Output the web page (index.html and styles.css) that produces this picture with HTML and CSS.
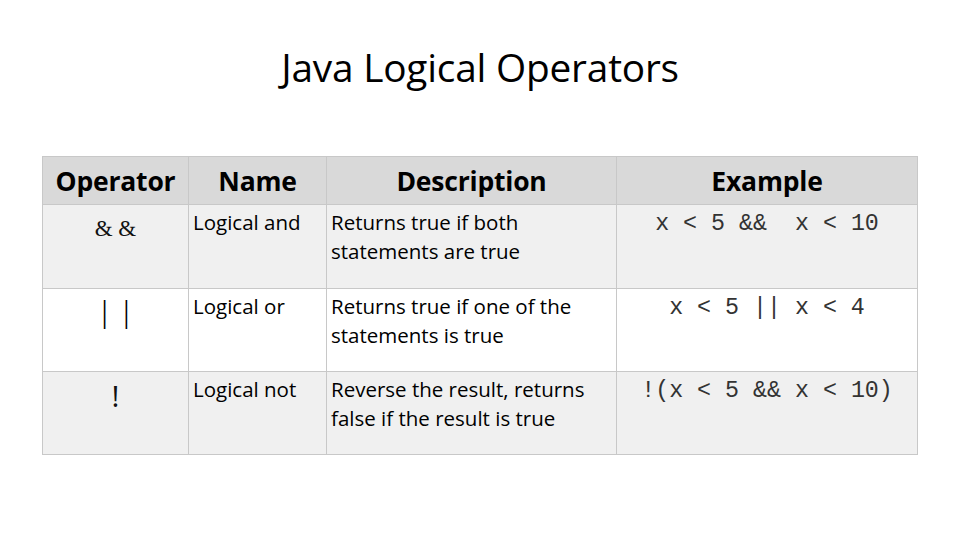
FILE: index.html
```html
<!DOCTYPE html>
<html lang="en">
<head>
<meta charset="utf-8">
<title>Java Logical Operators</title>
<link rel="stylesheet" href="styles.css">
</head>
<body>
<div class="slide">
  <h1 class="title">Java Logical Operators</h1>
  <table class="ops">
    <colgroup>
      <col class="c-op"><col class="c-name"><col class="c-desc"><col class="c-ex">
    </colgroup>
    <thead>
      <tr class="head">
        <th>Operator</th>
        <th>Name</th>
        <th>Description</th>
        <th>Example</th>
      </tr>
    </thead>
    <tbody>
      <tr class="shade">
        <td class="op op-amp">&amp; &amp;</td>
        <td class="txt">Logical and</td>
        <td class="txt">Returns true if both statements are true</td>
        <td class="ex">x &lt; 5 &amp;&amp;&nbsp; x &lt; 10</td>
      </tr>
      <tr class="plain">
        <td class="op op-bar">| |</td>
        <td class="txt">Logical or</td>
        <td class="txt">Returns true if one of the statements is true</td>
        <td class="ex">x &lt; 5 || x &lt; 4</td>
      </tr>
      <tr class="shade">
        <td class="op op-not">!</td>
        <td class="txt">Logical not</td>
        <td class="txt">Reverse the result, returns false if the result is true</td>
        <td class="ex">!(x &lt; 5 &amp;&amp; x &lt; 10)</td>
      </tr>
    </tbody>
  </table>
</div>
</body>
</html>
```
FILE: styles.css
```css
html, body {
  margin: 0;
  padding: 0;
  background: #ffffff;
}

.slide {
  width: 960px;
  height: 540px;
  box-sizing: border-box;
  padding: 42px 0 0 42px;
  font-family: "Open Sans", "Liberation Sans", sans-serif;
  color: #000;
}

.title {
  margin: 0 0 0 -42px;
  width: 960px;
  text-align: center;
  font-weight: 400;
  font-size: 38.8px;
  line-height: 50px;
  letter-spacing: -0.2px;
}

.ops {
  margin-top: 64px;
  border-collapse: collapse;
  table-layout: fixed;
  width: 875px;
}

.c-op { width: 146px; }
.c-name { width: 138px; }
.c-desc { width: 290px; }
.c-ex { width: 301px; }

.ops th,
.ops td {
  border: 1px solid #c8c8c8;
  vertical-align: top;
  padding: 0;
}

.head th {
  background: #d9d9d9;
  height: 47px;
  font-size: 26.5px;
  font-weight: 700;
  text-align: center;
  vertical-align: middle;
  letter-spacing: -0.2px;
  line-height: 30px;
}

.shade td { background: #f0f0f0; }
.plain td { background: #ffffff; }

tbody tr { height: 83px; }
tbody tr:first-child { height: 84px; }

.txt {
  font-size: 20.5px;
  line-height: 29px;
  padding: 3px 6px 0 4px !important;
}

.op {
  text-align: center;
  color: #111;
}

.op-amp {
  font-family: "Liberation Serif", serif;
  font-size: 23px;
  padding-top: 11px !important;
}

.op-bar {
  font-family: "Liberation Serif", serif;
  font-size: 31px;
  line-height: 36px;
  word-spacing: 8px;
  color: #000;
  padding-top: 5px !important;
}

.op-not {
  font-family: "Open Sans", sans-serif;
  font-size: 30px;
  line-height: 36px;
  padding-top: 6px !important;
}

.ex {
  text-align: center;
  font-family: "Liberation Mono", monospace;
  font-size: 23.3px;
  line-height: 30px;
  color: #333;
  padding-top: 4px !important;
  white-space: pre;
}
```
